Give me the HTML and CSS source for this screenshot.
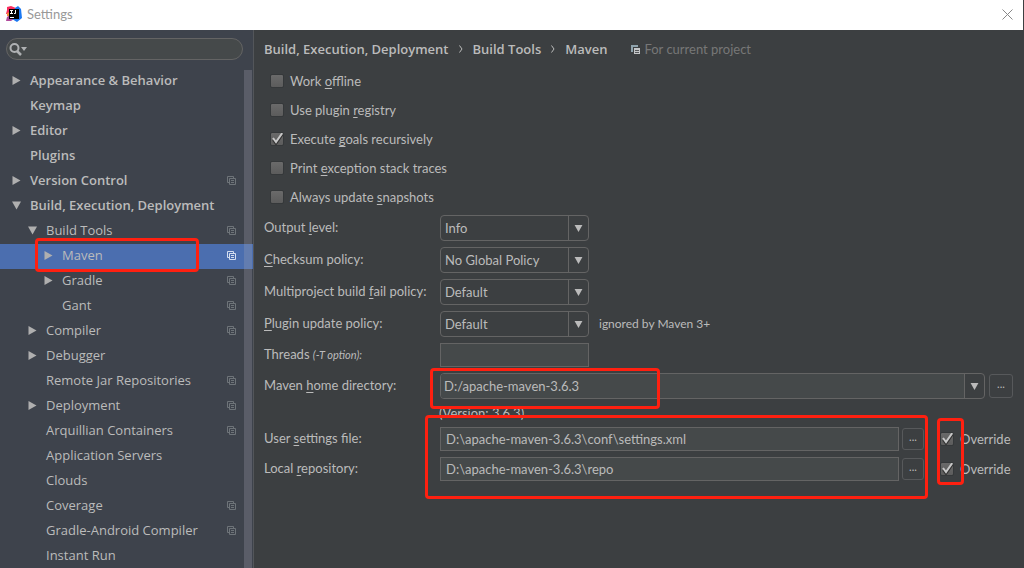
FILE: index.html
```html
<!DOCTYPE html>
<html lang="en">
<head>
<meta charset="utf-8">
<title>Settings</title>
<link rel="stylesheet" href="styles.css">
</head>
<body>
<svg class="defs" aria-hidden="true">
  <symbol id="right" viewBox="0 0 8 9"><path d="M0 0L8 4.5L0 9z" fill="currentColor"/></symbol>
  <symbol id="down" viewBox="0 0 9 8"><path d="M0 0H9L4.5 8z" fill="currentColor"/></symbol>
  <symbol id="copy" viewBox="0 0 9 9"><path d="M2.5 6.5H.5V.5H6.5V2.5M2.5 2.5H8.5V8.5H2.5zM4 4.5H7M4 6.5H7" fill="none" stroke="currentColor"/></symbol>
  <symbol id="copy-solid" viewBox="0 0 9 9"><path d="M0 0H7V2H2V7H0z" fill="#8fa3ad"/><path d="M3 3H9V9H3z" fill="#c4c6c8"/><path d="M4 5.500H8M4 7.500H8" stroke="#55585a"/></symbol>
</svg>
<header class="titlebar">
  <svg class="logo" viewBox="0 0 16 16" aria-hidden="true">
    <path d="M1 1L5 0L10 2L8 8L0 8L1 4z" fill="#fb2e5f"/>
    <path d="M1 7L4 6V11L1 10z" fill="#f58a3c"/>
    <path d="M1 11L4 9L8 13L5 15L0 15z" fill="#b14a9c"/>
    <path d="M9 2L12 0L15 3L16 12L11 16L6 13z" fill="#1b78f2"/>
    <path d="M3 3H13V13H3z" fill="#000"/>
    <path d="M4 4.500H7M5.500 4.500V8M4 7.500H7M9.500 4V7.500H8M4 11.500H8" fill="none" stroke="#fff"/>
  </svg>
  <h1 class="title">Settings</h1>
  <button class="close" aria-label="Close"><svg viewBox="0 0 11 11"><path d="M.5 .5L10.500 10.500M10.500 .5L.5 10.500" fill="none" stroke="#888"/></svg></button>
</header>
<div class="window">
  <aside class="sidebar">
    <div class="search">
      <svg class="lens" viewBox="0 0 19 13" aria-hidden="true"><circle cx="5.500" cy="5" r="4" fill="none" stroke="#afb1b3" stroke-width="2"/><path d="M8 8L12 12" stroke="#afb1b3" stroke-width="2.500"/><path d="M12 4H18L15 8z" fill="#afb1b3"/></svg>
      <input class="query" type="search" aria-label="Search settings">
    </div>
    <nav class="tree" aria-label="Settings">
      <a class="node top" href="#"><svg class="arrow"><use href="#right"/></svg><span class="name">Appearance &amp; Behavior</span></a>
      <a class="node top" href="#"><span class="arrow"></span><span class="name">Keymap</span></a>
      <a class="node top" href="#"><svg class="arrow"><use href="#right"/></svg><span class="name">Editor</span></a>
      <a class="node top" href="#"><span class="arrow"></span><span class="name">Plugins</span></a>
      <a class="node top" href="#"><svg class="arrow"><use href="#right"/></svg><span class="name">Version Control</span><svg class="scope"><use href="#copy"/></svg></a>
      <a class="node top" href="#"><svg class="arrow"><use href="#down"/></svg><span class="name">Build, Execution, Deployment</span></a>
      <a class="node sub" href="#"><svg class="arrow"><use href="#down"/></svg><span class="name">Build Tools</span><svg class="scope"><use href="#copy"/></svg></a>
      <a class="node leaf selected" href="#" aria-current="page"><svg class="arrow"><use href="#right"/></svg><span class="name">Maven</span><svg class="scope"><use href="#copy"/></svg><span class="mark mark-node"></span></a>
      <a class="node leaf" href="#"><svg class="arrow"><use href="#right"/></svg><span class="name">Gradle</span><svg class="scope"><use href="#copy"/></svg></a>
      <a class="node leaf" href="#"><span class="arrow"></span><span class="name">Gant</span><svg class="scope"><use href="#copy"/></svg></a>
      <a class="node sub" href="#"><svg class="arrow"><use href="#right"/></svg><span class="name">Compiler</span><svg class="scope"><use href="#copy"/></svg></a>
      <a class="node sub" href="#"><svg class="arrow"><use href="#right"/></svg><span class="name">Debugger</span></a>
      <a class="node sub" href="#"><span class="arrow"></span><span class="name">Remote Jar Repositories</span><svg class="scope"><use href="#copy"/></svg></a>
      <a class="node sub" href="#"><svg class="arrow"><use href="#right"/></svg><span class="name">Deployment</span><svg class="scope"><use href="#copy"/></svg></a>
      <a class="node sub" href="#"><span class="arrow"></span><span class="name">Arquillian Containers</span><svg class="scope"><use href="#copy"/></svg></a>
      <a class="node sub" href="#"><span class="arrow"></span><span class="name">Application Servers</span></a>
      <a class="node sub" href="#"><span class="arrow"></span><span class="name">Clouds</span></a>
      <a class="node sub" href="#"><span class="arrow"></span><span class="name">Coverage</span><svg class="scope"><use href="#copy"/></svg></a>
      <a class="node sub" href="#"><span class="arrow"></span><span class="name">Gradle-Android Compiler</span><svg class="scope"><use href="#copy"/></svg></a>
      <a class="node sub" href="#"><span class="arrow"></span><span class="name">Instant Run</span></a>
      <span class="thumb"></span>
    </nav>
  </aside>
  <main class="page">
    <div class="crumbs">
      <a href="#">Build, Execution, Deployment</a><svg class="sep" viewBox="0 0 4 8"><path d="M.5 .5L3 4L.5 7.500" fill="none" stroke="#bbb"/></svg><a href="#">Build Tools</a><svg class="sep" viewBox="0 0 4 8"><path d="M.5 .5L3 4L.5 7.500" fill="none" stroke="#bbb"/></svg><a href="#">Maven</a>
      <span class="hint"><svg class="scope"><use href="#copy-solid"/></svg>For current project</span>
    </div>
    <div class="checks">
      <label class="check"><input type="checkbox"><span>Work <u>o</u>ffline</span></label>
      <label class="check"><input type="checkbox"><span>Use plugin <u>r</u>egistry</span></label>
      <label class="check"><input type="checkbox" checked><span>Execute <u>g</u>oals recursively</span></label>
      <label class="check"><input type="checkbox"><span>Print <u>e</u>xception stack traces</span></label>
      <label class="check"><input type="checkbox"><span>Always update <u>s</u>napshots</span></label>
    </div>
    <form class="form">
      <div class="row"><label for="level">Output <u>l</u>evel:</label>
        <div class="combo"><select id="level"><option>Info</option></select><span class="drop"><svg><use href="#down"/></svg></span></div></div>
      <div class="row"><label for="checksum"><u>C</u>hecksum policy:</label>
        <div class="combo"><select id="checksum"><option>No Global Policy</option></select><span class="drop"><svg><use href="#down"/></svg></span></div></div>
      <div class="row"><label for="fail">Multiproject build <u>f</u>ail policy:</label>
        <div class="combo"><select id="fail"><option>Default</option></select><span class="drop"><svg><use href="#down"/></svg></span></div></div>
      <div class="row"><label for="update"><u>P</u>lugin update policy:</label>
        <div class="combo"><select id="update"><option>Default</option></select><span class="drop"><svg><use href="#down"/></svg></span></div><span class="note">ignored by Maven 3+</span></div>
      <div class="row"><label for="threads">Threads <i>(-T option):</i></label>
        <input class="field short" id="threads" type="text"></div>
      <div class="row"><label for="home">Maven <u>h</u>ome directory:</label>
        <div class="combo wide"><input id="home" type="text" value="D:/apache-maven-3.6.3"><button class="drop" type="button" aria-label="Show list"><svg><use href="#down"/></svg></button></div>
        <button class="browse large" type="button" aria-label="Browse">...</button><span class="mark mark-home"></span></div>
      <div class="version">(Version: 3.6.3)</div>
      <div class="paths">
        <div class="row"><label for="user">User <u>s</u>ettings file:</label>
          <input class="field" id="user" type="text" value="D:\apache-maven-3.6.3\conf\settings.xml"><button class="browse" type="button" aria-label="Browse">...</button>
          <label class="check override"><input type="checkbox" checked><span>Override</span></label></div>
        <div class="row"><label for="repo">Local <u>r</u>epository:</label>
          <input class="field" id="repo" type="text" value="D:\apache-maven-3.6.3\repo"><button class="browse" type="button" aria-label="Browse">...</button>
          <label class="check override"><input type="checkbox" checked><span>Override</span></label></div>
        <span class="mark mark-paths"></span><span class="mark mark-override"></span>
      </div>
    </form>
  </main>
</div>
</body>
</html>
```
FILE: styles.css
```css
* { box-sizing: border-box; }
body {
  margin: 0;
  height: 100vh;
  display: flex;
  flex-direction: column;
  overflow: hidden;
  background: #3c3f41;
  color: #bbb;
  font: 13px/20px Lato, "Noto Sans", sans-serif;
}
a { color: inherit; text-decoration: none; }
svg { display: block; flex: none; }
input, select, button { font: inherit; color: inherit; margin: 0; }
u { text-underline-offset: 2px; }
.defs { display: none; }

.titlebar {
  display: flex;
  align-items: center;
  flex: none;
  height: 30px;
  margin-right: 1px;
  padding: 0 10px 2px 6px;
  background: #fff;
}
.logo { width: 16px; height: 16px; }
.title { margin: 0 auto 0 5px; font-size: 13px; font-weight: 400; color: #999; }
.close { padding: 0; border: 0; background: none; }
.close svg { width: 11px; height: 11px; }

.window { display: flex; flex: 1; min-height: 0; }
.sidebar {
  flex: none;
  width: 254px;
  display: flex;
  flex-direction: column;
  background: #3e434c;
  border-right: 1px solid #53565a;
}
.search {
  display: flex;
  align-items: center;
  height: 22px;
  margin: 8px 10px 9px 6px;
  padding: 0 8px 0 2px;
  border: 1px solid #646464;
  border-radius: 11px;
  background: #45494a;
}
.lens { width: 19px; height: 13px; }
.query { flex: 1; min-width: 0; padding: 0; border: 0; outline: 0; background: none; }

.tree { position: relative; flex: 1; min-height: 0; overflow: hidden; }
.tree, .crumbs { font-family: "Open Sans", "Noto Sans", sans-serif; }
.node {
  position: relative;
  display: flex;
  align-items: center;
  height: 25px;
  padding: 0 17px 2px 12px;
}
.sub { padding-left: 28px; }
.leaf { padding-left: 44px; }
.top { font-weight: 600; }
.arrow { width: 9px; height: 9px; margin-right: 9px; color: #afafaf; }
.name { flex: 1; padding-bottom: 2px; white-space: nowrap; }
.scope { width: 9px; height: 9px; color: #6e7479; }
.selected { background: #4b6eaf; }
.selected .scope { color: #d5def0; }
.thumb {
  position: absolute;
  top: 1px;
  right: 1px;
  bottom: 0;
  width: 8px;
  background: rgba(166, 166, 180, .27);
}

.page { flex: 1; min-width: 0; padding: 9px 11px 0 10px; }
.crumbs { display: flex; align-items: center; font-weight: 600; }
.sep { width: 4px; height: 8px; margin: 0 10px; }
.hint { display: flex; align-items: center; gap: 4px; margin-left: 24px; font-family: Lato, sans-serif; font-weight: 400; color: #777; }

.checks { display: flex; flex-direction: column; gap: 9px; padding: 12px 0 8px 6px; }
.check { display: flex; align-items: center; gap: 6px; }
.check input {
  appearance: none;
  flex: none;
  width: 14px;
  height: 14px;
  border: 1px solid #35383a;
  border-radius: 2px;
  background: linear-gradient(#6a6a6a, #5c5c5c);
}
.check input:checked {
  background: url("data:image/svg+xml,%3Csvg xmlns='http://www.w3.org/2000/svg' viewBox='0 0 14 14'%3E%3Cpath d='M3 7L6 11L13 1' fill='none' stroke='%23333' stroke-width='2' transform='translate(0 1)'/%3E%3Cpath d='M3 6L6 10L13 0' fill='none' stroke='%23c8c8c8' stroke-width='2'/%3E%3C/svg%3E") border-box no-repeat, linear-gradient(#6a6a6a, #5c5c5c);
}

.form { display: flex; flex-direction: column; gap: 6px; }
.row { position: relative; display: flex; align-items: center; }
.row > label:first-child { flex: none; width: 176px; padding-bottom: 2px; white-space: nowrap; }
.row i { font-size: 11px; }
.combo {
  position: relative;
  display: flex;
  width: 149px;
  height: 26px;
  border: 1px solid #646464;
  border-radius: 4px;
}
.combo select, .combo input {
  appearance: none;
  flex: 1;
  min-width: 0;
  padding: 0 4px;
  border: 0;
  outline: 0;
  background: none;
}
.combo select { padding-right: 20px; }
.combo input { background: #45494a; border-radius: 3px 0 0 3px; padding: 0 3px; }
.drop {
  display: flex;
  align-items: center;
  justify-content: center;
  width: 20px;
  padding: 0;
  border: 0;
  border-left: 1px solid #646464;
  background: none;
}
select + .drop { position: absolute; inset: 0 0 0 auto; pointer-events: none; }
.drop svg { width: 9px; height: 7px; }
.wide { flex: 1; margin-right: 4px; }
.note { margin-left: 10px; font-size: 12px; }
.field {
  flex: 1;
  min-width: 0;
  height: 24px;
  padding: 0 5px;
  border: 1px solid #646464;
  outline: 0;
  background: #45494a;
}
.short { flex: none; width: 149px; }
.browse {
  width: 22px;
  height: 22px;
  margin-left: 3px;
  padding: 0 0 4px;
  border: 1px solid #57595b;
  border-radius: 3px;
  background: none;
  font-size: 11px;
  line-height: 12px;
}
.large { width: 24px; height: 24px; margin-left: 0; }
.version { margin-left: 175px; line-height: 16px; }
.paths { position: relative; display: flex; flex-direction: column; gap: 6px; }
.override { width: 73px; margin-left: 16px; }

.mark { position: absolute; border: 3px solid #ff2010; border-radius: 4px; pointer-events: none; }
.mark-node { left: 35px; right: 54px; top: -6px; height: 34px; z-index: 1; }
.mark-home { left: 166px; width: 230px; top: -5px; height: 41px; }
.mark-paths { left: 161px; right: 85px; top: -12px; bottom: -18px; }
.mark-override { right: 49px; width: 27px; top: -9px; bottom: -4px; }
```
